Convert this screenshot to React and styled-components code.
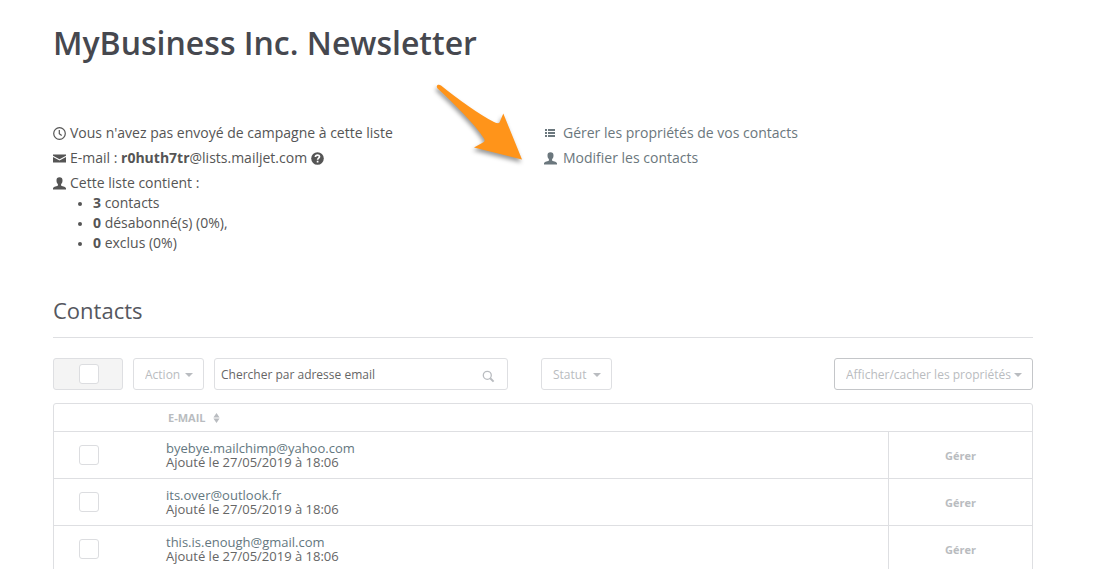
import { useState } from "react";
import styled, { createGlobalStyle } from "styled-components";

const GlobalStyle = createGlobalStyle`
  * {
    box-sizing: border-box;
  }
  body {
    margin: 0;
    background-color: #fff;
    color: #555;
    font-family: "Open Sans", "Noto Sans", sans-serif;
    font-size: 14px;
    line-height: 20px;
  }
`;

const Container = styled.main`
  padding: 20px 67px 0 53px;
`;
const Title = styled.h1`
  margin: 0 0 58px;
  font-size: 32px;
  font-weight: 600;
  line-height: 45px;
  color: #46484f;
`;
const Overview = styled.section`
  position: relative;
  display: grid;
  grid-template-columns: 1fr 1fr;
`;
const Lines = styled.div`
  display: flex;
  flex-direction: column;
  gap: 5px;
`;
const Line = styled.div`
  display: flex;
  align-items: center;
  gap: 4px;
  white-space: nowrap;
`;
const Stats = styled.ul`
  margin: 0;
  padding-left: 40px;
`;
const Stat = styled.li`
  &::marker {
    font-size: 11px;
  }
`;
const ActionLink = styled.a`
  display: flex;
  align-items: center;
  gap: 6px;
  padding-left: 1px;
  color: #6b777d;
  text-decoration: none;
`;
const Icon = styled.svg`
  flex: none;
  width: 13px;
  height: 13px;
  fill: currentColor;
`;
const Arrow = styled.svg`
  position: absolute;
  left: 379px;
  top: -43px;
  width: 100px;
  height: 90px;
  pointer-events: none;
  filter: drop-shadow(-1px 3px 2px rgba(0, 0, 0, 0.4));
`;

const SectionTitle = styled.h2`
  margin: 42px 0 20px;
  padding-bottom: 12px;
  border-bottom: 1px solid #dedfe2;
  font-size: 22px;
  font-weight: 400;
  line-height: 30px;
  color: #55575e;
`;
const Toolbar = styled.div`
  display: flex;
  align-items: center;
  gap: 10px;
  margin-bottom: 13px;
`;
const SelectAll = styled.label`
  display: flex;
  align-items: center;
  width: 70px;
  height: 32px;
  padding-left: 25px;
  border: 1px solid #dedfe2;
  border-radius: 3px;
  background-color: #f4f4f4;
`;
const Checkbox = styled.input`
  appearance: none;
  display: block;
  width: 20px;
  height: 20px;
  margin: 0;
  border: 1px solid #dcdde0;
  border-radius: 3px;
  background-color: #fff;
  &:checked {
    background-color: #fead0d;
  }
`;
const SelectBox = styled.div`
  position: relative;
  width: ${(props) => props.$width}px;
  color: #b9bcc0;
`;
const Select = styled.select`
  appearance: none;
  display: block;
  width: 100%;
  height: 32px;
  padding: 0 11px;
  border: 1px solid ${(props) => (props.$strong ? "#c4c6c9" : "#dedfe2")};
  border-radius: 3px;
  background-color: #fff;
  color: inherit;
  font-family: inherit;
  font-size: 12px;
`;
const Caret = styled.svg`
  position: absolute;
  right: 11px;
  top: 15px;
  width: 8px;
  height: 4px;
  fill: currentColor;
  pointer-events: none;
`;
const Search = styled.form`
  display: flex;
  align-items: center;
  width: 294px;
  height: 32px;
  margin-right: 23px;
  padding: 0 12px 0 6px;
  border: 1px solid #dedfe2;
  border-radius: 3px;
`;
const SearchInput = styled.input`
  flex: 1;
  min-width: 0;
  padding: 0;
  border: none;
  outline: none;
  font-family: inherit;
  font-size: 12px;
  color: #555;
  &::placeholder {
    color: #666;
    opacity: 1;
  }
`;
const SearchButton = styled.button`
  display: flex;
  padding: 4px 0 0;
  border: none;
  background: none;
  color: #b9bcc0;
  cursor: pointer;
`;
const Spacer = styled.div`
  flex: 1;
`;

const Table = styled.table`
  width: 100%;
  border: 1px solid #dedfe2;
  border-radius: 3px;
  border-spacing: 0;
  table-layout: fixed;
`;
const HeadCell = styled.th`
  width: ${(props) => props.$width};
  height: 27px;
  padding: 0;
  text-align: left;
  font-size: 11px;
  line-height: 14px;
  color: #b9bcc0;
`;
const SortButton = styled.button`
  display: flex;
  align-items: center;
  gap: 7px;
  padding: 0 0 0 2px;
  border: none;
  background: none;
  color: inherit;
  font: inherit;
`;
const SortIcon = styled.svg`
  width: 7px;
  height: 10px;
  fill: currentColor;
`;
const Cell = styled.td`
  height: 47px;
  padding: ${(props) => (props.$check ? "0 0 0 25px" : "0")};
  border-top: 1px solid #dedfe2;
  font-size: 13px;
  line-height: 14px;
  color: #666;
`;
const ManageCell = styled(Cell)`
  border-left: 1px solid #dedfe2;
  text-align: center;
`;
const Email = styled.a`
  display: block;
  color: #647780;
  text-decoration: none;
`;
const Manage = styled.a`
  color: #b9bcc0;
  font-size: 11px;
  font-weight: 700;
  text-decoration: none;
`;

const contacts = [
  { email: "byebye.mailchimp@yahoo.com", added: "27/05/2019 à 18:06" },
  { email: "its.over@outlook.fr", added: "27/05/2019 à 18:06" },
  { email: "this.is.enough@gmail.com", added: "27/05/2019 à 18:06" },
];

const UserIcon = () => (
  <Icon viewBox="0 0 13 13" aria-hidden="true">
    <path d="M6.5 0.3C8.5 0.3 9.6 1.5 9.5 3.4C9.5 5.2 8.9 6.2 8.1 7.1V8.4C8.3 9.2 12.8 9.2 13 11.2V12.6H0V11.2C0.2 9.2 4.7 9.2 4.9 8.4V7.1C4.1 6.2 3.5 5.2 3.5 3.4C3.4 1.5 4.5 0.3 6.5 0.3Z" />
  </Icon>
);

const Dropdown = ({ label, width, strong }) => (
  <SelectBox $width={width}>
    <Select aria-label={label} $strong={strong}>
      <option>{label}</option>
    </Select>
    <Caret viewBox="0 0 8 4" aria-hidden="true">
      <path d="M0 0H8L4 4Z" />
    </Caret>
  </SelectBox>
);

const App = () => {
  const [selected, setSelected] = useState([]);

  const toggle = (email) => {
    setSelected(
      selected.includes(email)
        ? selected.filter((item) => item !== email)
        : [...selected, email]
    );
  };
  const toggleAll = (e) => {
    setSelected(e.target.checked ? contacts.map((c) => c.email) : []);
  };

  return (
    <Container>
      <GlobalStyle />
      <Title>MyBusiness Inc. Newsletter</Title>
      <Overview>
        <Lines>
          <Line>
            <Icon viewBox="0 0 13 13" aria-hidden="true">
              <path
                d="M6.5 0.7a5.8 5.8 0 1 0 0 11.6a5.8 5.8 0 1 0 0-11.6M6.3 3V6.8L8.7 8.5"
                fill="none"
                stroke="currentColor"
                strokeWidth="1.2"
              />
            </Icon>
            <span>Vous n'avez pas envoyé de campagne à cette liste</span>
          </Line>
          <Line>
            <Icon viewBox="0 0 13 13" aria-hidden="true">
              <path d="M0 2.5H13V3.7L6.5 7.3L0 3.7ZM0 5.1L6.5 8.6L13 5.1V10.5H0Z" />
            </Icon>
            <span>
              E-mail : <b>r0huth7tr</b>@lists.mailjet.com
            </span>
            <Icon viewBox="0 0 13 13" aria-hidden="true">
              <circle cx="6.5" cy="6.5" r="6.3" />
              <path
                d="M4.4 5C4.5 2.4 8.6 2.5 8.5 4.8C8.4 6.1 6.6 6.2 6.6 7.8M6.6 8.8V10.4"
                fill="none"
                stroke="#fff"
                strokeWidth="1.7"
              />
            </Icon>
          </Line>
          <div>
            <Line>
              <UserIcon />
              <span>Cette liste contient :</span>
            </Line>
            <Stats>
              <Stat><b>3</b> contacts</Stat>
              <Stat><b>0</b> désabonné(s) (0%),</Stat>
              <Stat><b>0</b> exclus (0%)</Stat>
            </Stats>
          </div>
        </Lines>
        <Lines>
          <ActionLink href="#properties">
            <Icon viewBox="0 0 13 13" aria-hidden="true">
              <path d="M1 2H3V4H1ZM4 2H11V4H4ZM1 5H3V7H1ZM4 5H11V7H4ZM1 8H3V10H1ZM4 8H11V10H4Z" />
            </Icon>
            Gérer les propriétés de vos contacts
          </ActionLink>
          <ActionLink href="#contacts">
            <UserIcon />
            Modifier les contacts
          </ActionLink>
        </Lines>
        <Arrow viewBox="0 0 100 90" aria-hidden="true">
          <path
            d="M5.5 5C6.5 4.4 8 4.6 9 5.4C26 19 48 35 62 42C65 43.6 67 43.4 67.5 42.5L71.3 33.5L90 79.5L42 67.5L51 62.5C53 61.5 53 60 52 58.5C42 43 22 24 5.4 8.2C4.5 7.2 4.6 5.6 5.5 5Z"
            fill="#ff941a"
          />
        </Arrow>
      </Overview>

      <SectionTitle>Contacts</SectionTitle>
      <Toolbar>
        <SelectAll>
          <Checkbox
            type="checkbox"
            aria-label="Tout sélectionner"
            checked={selected.length === contacts.length}
            onChange={toggleAll}
          />
        </SelectAll>
        <Dropdown label="Action" width={71} />
        <Search role="search" onSubmit={(e) => e.preventDefault()}>
          <SearchInput
            type="text"
            aria-label="Chercher par adresse email"
            placeholder="Chercher par adresse email"
          />
          <SearchButton type="submit" aria-label="Chercher">
            <Icon viewBox="0 0 13 13" aria-hidden="true">
              <circle cx="5.3" cy="5.3" r="4" fill="none" stroke="currentColor" strokeWidth="1.3" />
              <path d="M8.2 8.2L11.6 11.6" stroke="currentColor" strokeWidth="2" />
            </Icon>
          </SearchButton>
        </Search>
        <Dropdown label="Statut" width={71} />
        <Spacer />
        <Dropdown label="Afficher/cacher les propriétés" width={199} strong />
      </Toolbar>

      <Table>
        <thead>
          <tr>
            <HeadCell $width="112px" />
            <HeadCell>
              <SortButton type="button">
                E-MAIL
                <SortIcon viewBox="0 0 7 10" aria-hidden="true">
                  <path d="M3.5 0L6.6 4.6H0.4ZM0.4 5.6H6.6L3.5 10Z" />
                </SortIcon>
              </SortButton>
            </HeadCell>
            <HeadCell $width="144px" />
          </tr>
        </thead>
        <tbody>
          {contacts.map((contact) => (
            <tr key={contact.email}>
              <Cell $check>
                <Checkbox
                  type="checkbox"
                  aria-label={contact.email}
                  checked={selected.includes(contact.email)}
                  onChange={() => toggle(contact.email)}
                />
              </Cell>
              <Cell>
                <Email href="#contact">{contact.email}</Email>
                Ajouté le {contact.added}
              </Cell>
              <ManageCell>
                <Manage href="#manage">Gérer</Manage>
              </ManageCell>
            </tr>
          ))}
        </tbody>
      </Table>
    </Container>
  );
};

export default App;
